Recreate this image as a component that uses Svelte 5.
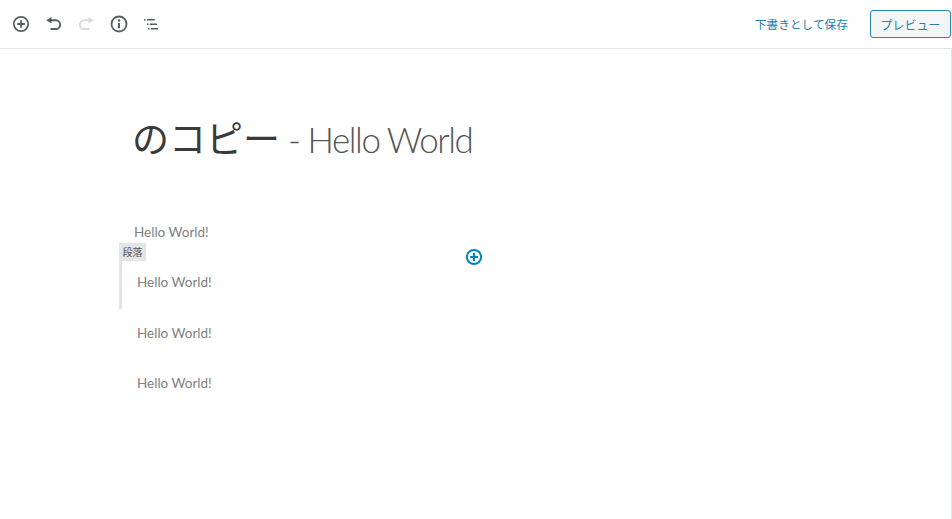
<script>
  const blocks = ['Hello World!', 'Hello World!', 'Hello World!'];
</script>

<div class="editor">
  <header class="toolbar">
    <div class="tools">
      <button class="tool" aria-label="ブロックの追加">
        <svg viewBox="0 0 20 20" width="20" height="20"><circle cx="10" cy="10" r="7.2" fill="none" stroke="#555d66" stroke-width="1.7"/><path d="M10 6.2v7.6M6.2 10h7.6" stroke="#555d66" stroke-width="1.8"/></svg>
      </button>
      <button class="tool" aria-label="元に戻す">
        <svg viewBox="0 0 20 20" width="20" height="20"><path d="M7.5 3v6.6L2.2 6.300z" fill="#555d66"/><path d="M7 6.300h4.800a4.200 4.200 0 0 1 0 8.700H6.500" fill="none" stroke="#555d66" stroke-width="1.900"/></svg>
      </button>
      <button class="tool" aria-label="やり直す">
        <svg viewBox="0 0 20 20" width="20" height="20"><path d="M12.500 3v6.600l5.300-3.300z" fill="#d9dbdd"/><path d="M13 6.300H8.200a4.200 4.200 0 0 0 0 8.700h5.300" fill="none" stroke="#d9dbdd" stroke-width="1.900"/></svg>
      </button>
      <button class="tool" aria-label="情報">
        <svg viewBox="0 0 20 20" width="20" height="20"><circle cx="10" cy="10" r="7.500" fill="none" stroke="#555d66" stroke-width="1.800"/><path d="M10 9v5.200" stroke="#555d66" stroke-width="2"/><circle cx="10" cy="6.500" r="1.200" fill="#555d66"/></svg>
      </button>
      <button class="tool" aria-label="リスト">
        <svg viewBox="0 0 20 20" width="20" height="20"><path d="M3 5.800h1.500M5.800 5.800h8M6 10.300h1.500M8.800 10.300h7.200M7 14.800h1.500M9.800 14.800h7.200" stroke="#555d66" stroke-width="1.400" fill="none"/></svg>
      </button>
    </div>
    <div class="actions">
      <span class="save">下書きとして保存</span>
      <button class="preview">プレビュー</button>
    </div>
  </header>

  <main class="content">
    <h1 class="title"><span class="jp">のコピー</span> - Hello World</h1>

    <p class="first">Hello World!</p>

    <div class="selected">
      <span class="label">段落</span>
      <p>{blocks[0]}</p>
      <button class="inserter" aria-label="ブロックを追加">
        <svg viewBox="0 0 20 20" width="20" height="20"><circle cx="10" cy="10" r="7.100" fill="none" stroke="#0085ba" stroke-width="2"/><path d="M10 6v8M6 10h8" stroke="#0085ba" stroke-width="2"/></svg>
      </button>
    </div>

    <div class="blocks">
      {#each blocks.slice(1) as text}
        <p>{text}</p>
      {/each}
    </div>
  </main>
</div>

<style>
  :global(body) {
    margin: 0;
    background: #fff;
  }

  .editor {
    height: 519px;
    overflow: hidden;
    font-family: "Noto Sans CJK JP", "Open Sans", sans-serif;
  }

  .toolbar {
    height: 48px;
    display: flex;
    align-items: center;
    justify-content: space-between;
    border-bottom: 1px solid #e2e4e7;
  }

  .tools {
    display: flex;
    gap: 12.5px;
    padding-left: 11px;
  }

  .tool {
    width: 20px;
    height: 20px;
    padding: 0;
    border: 0;
    background: none;
    display: block;
  }

  .tool svg { display: block; }

  .actions {
    display: flex;
    align-items: center;
    gap: 22px;
    padding-right: 1px;
  }

  .save {
    font-size: 11.7px;
    line-height: 16px;
    margin-top: -1px;
    color: #2180ad;
  }

  .preview {
    width: 81px;
    height: 28px;
    padding: 0;
    border: 1px solid #2b84ad;
    border-radius: 3px;
    background: #f3f5f6;
    color: #2b7fa8;
    font-family: inherit;
    font-size: 12px;
  }

  .content {
    height: 470px;
    border-right: 1px solid #e2e4e7;
    padding-left: 119px;
    box-sizing: border-box;
  }

  .title {
    margin: 0;
    padding: 63px 0 0 13px;
    height: 108px;
    font-family: "Lato", "Noto Sans CJK JP", sans-serif;
    font-weight: 300;
    font-size: 35px;
    line-height: 50px;
    letter-spacing: -1.45px;
    color: #555;
  }

  .jp {
    font-family: "Noto Sans CJK JP", sans-serif;
    font-weight: 400;
    font-size: 37px;
    letter-spacing: 0;
    color: #3a3a3a;
  }

  p {
    margin: 0;
    font-family: "Lato", "Noto Sans CJK JP", sans-serif;
    font-size: 13.5px;
    line-height: 20px;
    color: #808080;
  }

  .first {
    padding-left: 15px;
    margin-top: 2px;
    height: 21px;
  }

  .selected {
    position: relative;
    width: 340px;
    padding: 29px 0 17px;
    border-left: 3px solid #e2e4e7;
  }

  .selected p {
    padding-left: 15px;
  }

  .label {
    position: absolute;
    left: -3px;
    top: 0;
    width: 27px;
    height: 18px;
    background: #e2e4e7;
    color: #555;
    font-size: 10px;
    line-height: 18px;
    text-align: center;
  }

  .inserter {
    position: absolute;
    left: 342px;
    top: 4px;
    width: 20px;
    height: 20px;
    padding: 0;
    border: 0;
    background: none;
  }

  .inserter svg { display: block; }

  .blocks {
    display: flex;
    flex-direction: column;
    gap: 30px;
    padding: 14px 0 0 18px;
  }
</style>
